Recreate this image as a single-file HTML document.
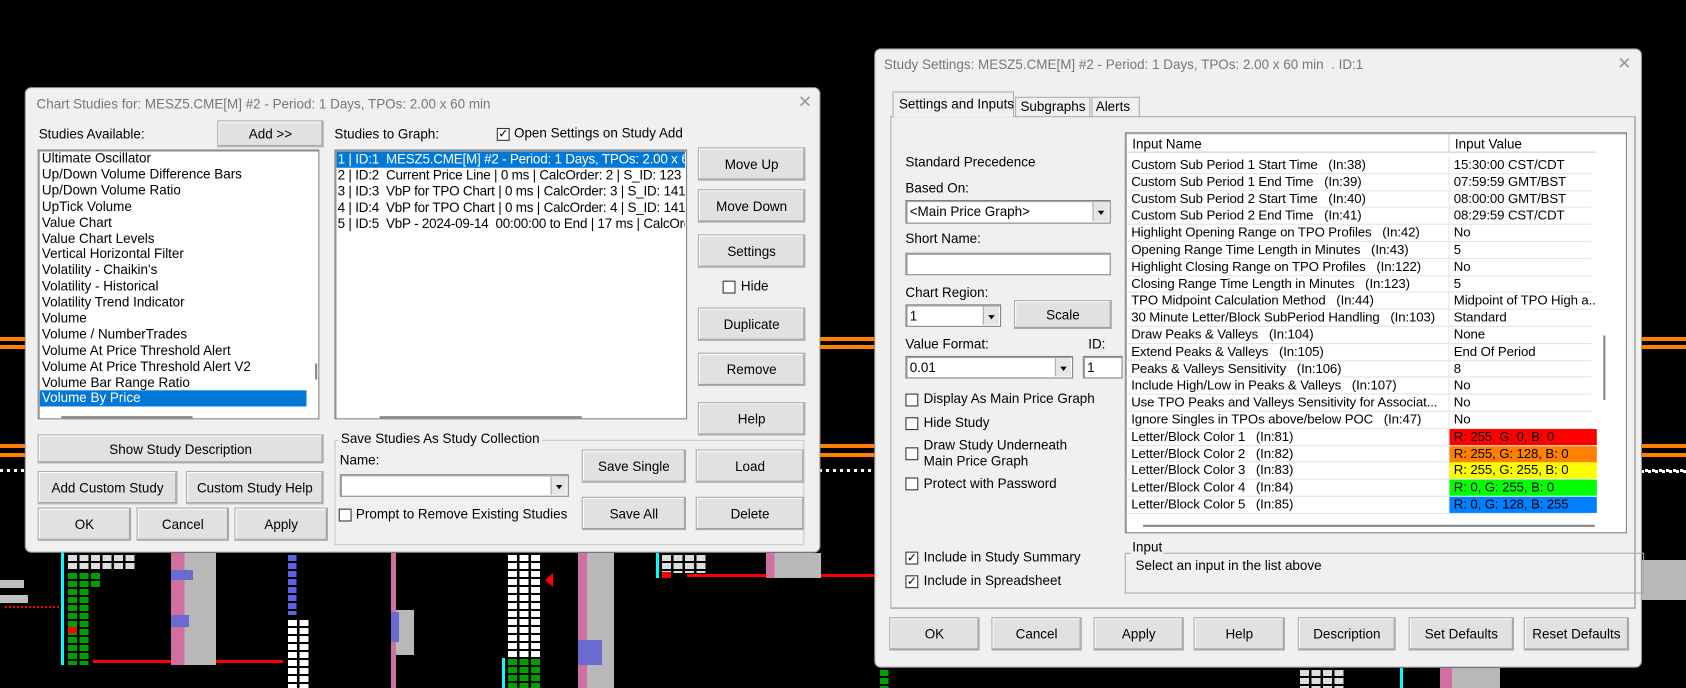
<!DOCTYPE html>
<html><head><meta charset="utf-8"><style>
*{box-sizing:border-box;margin:0;padding:0}
body{width:1686px;height:688px;background:#000;overflow:hidden;position:relative;font-family:"Liberation Sans",sans-serif}
.a{position:absolute}
#S{position:absolute;left:0;top:0;width:1568px;height:640px;transform:scale(1.0753);transform-origin:0 0}
.dlg{position:absolute;background:#f0f0f0;border:1px solid #9a9a9a;border-radius:6px;font-size:12.5px;color:#000}
.t{position:absolute;white-space:nowrap;font-size:12.5px;line-height:15px}
.btn{position:absolute;background:#e1e1e1;border:1px solid #adadad;box-shadow:inset -1px -1px 0 #a0a0a0,inset 1px 1px 0 #fff;text-align:center;font-size:12.5px;display:flex;align-items:center;justify-content:center;white-space:nowrap}
.box{position:absolute;background:#fff;border:1px solid #828282;box-shadow:inset 1px 1px 0 #a0a0a0}
.cb{position:absolute;width:12px;height:12px;border:1px solid #333;background:#fff;font-size:11px;line-height:10px;text-align:center}
.dd{position:absolute;right:1px;top:1px;bottom:1px;width:15px;background:#e6e6e6;border-left:1px solid #aaa}
.dd:after{content:"";position:absolute;left:4px;top:8px;border:3.5px solid transparent;border-top:4px solid #000}
.title{position:absolute;color:#777;font-size:12.5px;white-space:nowrap}
.x{position:absolute;color:#999;font-size:16px}
.row{position:absolute;left:0;height:15.8px;width:433px;border-bottom:1px solid #e4e4e4;font-size:12.3px;white-space:nowrap;line-height:15px;letter-spacing:-0.1px}
.row span{position:absolute}
.row .v{left:301px;width:137px;height:15px;padding-left:4px}
.row .n{left:5px}
.row:before{content:"";position:absolute;left:300px;top:0;bottom:0;border-left:1px solid #e4e4e4}
.wsq{position:absolute;background-image:linear-gradient(90deg,transparent 9px,#000 9px),linear-gradient(0deg,transparent 6px,#000 6px);background-size:11.5px 8px}
</style></head><body>
<!-- chart background -->
<div class="a" style="left:0;top:337px;width:1686px;height:4px;background:#ff7f00"></div>
<div class="a" style="left:0;top:345px;width:1686px;height:4px;background:#ff7f00"></div>
<div class="a" style="left:0;top:444px;width:1686px;height:4px;background:#ff7f00"></div>
<div class="a" style="left:0;top:453px;width:1686px;height:4px;background:#ff7f00"></div>
<div class="a" style="left:0;top:469px;width:1686px;height:3px;background:repeating-linear-gradient(90deg,#fff 0 3px,transparent 3px 7px)"></div>
<div class="a" style="left:0;top:580px;width:24px;height:8px;background:#c0c0c0"></div>
<div class="a" style="left:0;top:595px;width:28px;height:8px;background:#c0c0c0"></div>
<div class="a" style="left:5px;top:606px;width:55px;height:2px;background:repeating-linear-gradient(90deg,#f00 0 2px,transparent 2px 4px)"></div>
<div class="a" style="left:61px;top:540px;width:3px;height:125px;background:#0ff"></div>
<div class="a wsq" style="left:68px;top:553px;width:68px;height:18px;background-color:#ddd"></div>
<div class="a wsq" style="left:68px;top:571px;width:34px;height:16px;background-color:#00a000"></div>
<div class="a wsq" style="left:68px;top:587px;width:23px;height:78px;background-color:#00a000"></div>
<div class="a" style="left:68px;top:627px;width:9px;height:6px;background:#f00"></div>
<div class="a" style="left:93px;top:660px;width:190px;height:3px;background:#f00"></div>
<div class="a" style="left:171px;top:553px;width:45px;height:112px;background:linear-gradient(90deg,#d070a0 0 30%,#b8b8b8 30%)"></div>
<div class="a" style="left:171px;top:570px;width:22px;height:10px;background:#6a6ad0"></div>
<div class="a" style="left:171px;top:615px;width:18px;height:12px;background:#6a6ad0"></div>
<div class="a wsq" style="left:288px;top:553px;width:11px;height:62px;background-color:#6060e0"></div>
<div class="a wsq" style="left:288px;top:618px;width:23px;height:70px;background-color:#fff"></div>
<div class="a" style="left:391px;top:553px;width:5px;height:135px;background:#d070a0"></div>
<div class="a" style="left:396px;top:610px;width:18px;height:45px;background:#b8b8b8"></div>
<div class="a" style="left:391px;top:612px;width:8px;height:30px;background:#6a6ad0"></div>
<div class="a wsq" style="left:508px;top:553px;width:34px;height:104px;background-color:#fff"></div>
<div class="a wsq" style="left:508px;top:657px;width:34px;height:31px;background-color:#00a000"></div>
<div class="a" style="left:502px;top:658px;width:3px;height:30px;background:#0ff"></div>
<div class="a" style="left:545px;top:573px;width:0;height:0;border:7px solid transparent;border-right:8px solid #f00;border-left:0"></div>
<div class="a" style="left:578px;top:553px;width:36px;height:135px;background:linear-gradient(90deg,#d070a0 0 25%,#b8b8b8 25%)"></div>
<div class="a" style="left:578px;top:640px;width:24px;height:25px;background:#6a6ad0"></div>
<div class="a" style="left:656px;top:553px;width:3px;height:25px;background:#0ff"></div>
<div class="a wsq" style="left:662px;top:553px;width:46px;height:20px;background-color:#ddd"></div>
<div class="a" style="left:662px;top:572px;width:9px;height:6px;background:#f00"></div>
<div class="a" style="left:687px;top:574px;width:190px;height:3px;background:#f00"></div>
<div class="a" style="left:766px;top:553px;width:55px;height:25px;background:linear-gradient(90deg,#d070a0 0 15%,#b8b8b8 15%)"></div>
<div class="a wsq" style="left:880px;top:668px;width:11px;height:20px;background-color:#00a000"></div>
<div class="a wsq" style="left:1300px;top:668px;width:46px;height:20px;background-color:#ddd"></div>
<div class="a" style="left:1400px;top:668px;width:3px;height:20px;background:#0ff"></div>
<div class="a" style="left:1440px;top:668px;width:60px;height:20px;background:linear-gradient(90deg,#d070a0 0 20%,#b8b8b8 20%)"></div>
<div class="a" style="left:1641px;top:470px;width:45px;height:3px;background:repeating-linear-gradient(90deg,#fff 0 3px,transparent 3px 7px)"></div>
<div class="a" style="left:1641px;top:560px;width:45px;height:40px;background:#b8b8b8"></div>

<div id="S">
<!-- LEFT DIALOG -->
<div class="dlg" style="left:23px;top:81px;width:740px;height:433px">
 <div class="title" style="left:10px;top:8px">Chart Studies for: MESZ5.CME[M] #2 - Period: 1 Days, TPOs: 2.00 x 60 min</div>
 <div class="x" style="left:718px;top:3px">✕</div>
</div>
<div class="t" style="left:36px;top:118px">Studies Available:</div>
<div class="btn" style="left:202px;top:112px;width:99px;height:25px">Add &gt;&gt;</div>
<div class="box" style="left:35px;top:139px;width:262px;height:251px"></div>
<div class="t" style="left:39px;top:140px;line-height:14.9px">Ultimate Oscillator<br>Up/Down Volume Difference Bars<br>Up/Down Volume Ratio<br>UpTick Volume<br>Value Chart<br>Value Chart Levels<br>Vertical Horizontal Filter<br>Volatility - Chaikin's<br>Volatility - Historical<br>Volatility Trend Indicator<br>Volume<br>Volume / NumberTrades<br>Volume At Price Threshold Alert<br>Volume At Price Threshold Alert V2<br>Volume Bar Range Ratio</div>
<div class="a" style="left:37px;top:363px;width:248px;height:15px;background:#0078d7"></div>
<div class="t" style="left:39px;top:363px;color:#fff">Volume By Price</div>
<div class="a" style="left:293px;top:338px;width:2px;height:15px;background:#888"></div>
<div class="a" style="left:57px;top:387px;width:122px;height:2px;background:#888"></div>
<div class="t" style="left:311px;top:118px">Studies to Graph:</div>
<div class="cb" style="left:462px;top:119px">✓</div>
<div class="t" style="left:478px;top:117px">Open Settings on Study Add</div>
<div class="box" style="left:311px;top:139px;width:328px;height:251px;overflow:hidden"></div>
<div class="a" style="left:313px;top:141px;width:324px;height:15px;background:#0078d7"></div>
<div class="t" style="left:314px;top:141px;line-height:15px;width:323px;overflow:hidden;letter-spacing:-0.2px"><span style="color:#fff">1 | ID:1&nbsp; MESZ5.CME[M] #2 - Period: 1 Days, TPOs: 2.00 x 60</span><br>2 | ID:2&nbsp; Current Price Line | 0 ms | CalcOrder: 2 | S_ID: 123<br>3 | ID:3&nbsp; VbP for TPO Chart | 0 ms | CalcOrder: 3 | S_ID: 141<br>4 | ID:4&nbsp; VbP for TPO Chart | 0 ms | CalcOrder: 4 | S_ID: 141<br>5 | ID:5&nbsp; VbP - 2024-09-14&nbsp; 00:00:00 to End | 17 ms | CalcOrder</div>
<div class="a" style="left:353px;top:387px;width:188px;height:2px;background:#888"></div>
<div class="btn" style="left:649px;top:137px;width:100px;height:31px">Move Up</div>
<div class="btn" style="left:649px;top:176px;width:100px;height:31px">Move Down</div>
<div class="btn" style="left:649px;top:218px;width:100px;height:31px">Settings</div>
<div class="cb" style="left:672px;top:261px"></div>
<div class="t" style="left:689px;top:259px">Hide</div>
<div class="btn" style="left:649px;top:286px;width:100px;height:31px">Duplicate</div>
<div class="btn" style="left:649px;top:328px;width:100px;height:31px">Remove</div>
<div class="btn" style="left:649px;top:374px;width:100px;height:31px">Help</div>
<div class="btn" style="left:35px;top:404px;width:266px;height:27px">Show Study Description</div>
<div class="btn" style="left:35px;top:438px;width:130px;height:31px">Add Custom Study</div>
<div class="btn" style="left:173px;top:438px;width:128px;height:31px">Custom Study Help</div>
<div class="btn" style="left:35px;top:472px;width:87px;height:31px">OK</div>
<div class="btn" style="left:127px;top:472px;width:86px;height:31px">Cancel</div>
<div class="btn" style="left:218px;top:472px;width:87px;height:31px">Apply</div>
<div class="a" style="left:311px;top:409px;width:437px;height:98px;border:1px solid #c8c8c8"></div>
<div class="t" style="left:315px;top:401px;background:#f0f0f0;padding:0 2px">Save Studies As Study Collection</div>
<div class="t" style="left:316px;top:421px">Name:</div>
<div class="box" style="left:316px;top:441px;width:213px;height:21px"><div class="dd"></div></div>
<div class="cb" style="left:315px;top:473px"></div>
<div class="t" style="left:331px;top:471px">Prompt to Remove Existing Studies</div>
<div class="btn" style="left:541px;top:418px;width:97px;height:31px">Save Single</div>
<div class="btn" style="left:647px;top:418px;width:101px;height:31px">Load</div>
<div class="btn" style="left:541px;top:462px;width:97px;height:31px">Save All</div>
<div class="btn" style="left:647px;top:462px;width:101px;height:31px">Delete</div>

<!-- RIGHT DIALOG -->
<div class="dlg" style="left:813px;top:45px;width:714px;height:576px">
 <div class="title" style="left:8px;top:7px">Study Settings: MESZ5.CME[M] #2 - Period: 1 Days, TPOs: 2.00 x 60 min&nbsp; . ID:1</div>
 <div class="x" style="left:690px;top:3px">✕</div>
</div>
<div class="a" style="left:828px;top:108px;width:693px;height:458px;border:1px solid #adadad;border-right-color:#888;border-bottom-color:#888"></div>
<div class="a" style="left:830px;top:85px;width:113px;height:24px;border:1px solid #adadad;border-bottom:none;background:#f0f0f0"></div>
<div class="t" style="left:836px;top:90px">Settings and Inputs</div>
<div class="a" style="left:944px;top:90px;width:70px;height:19px;border:1px solid #adadad;border-bottom:none"></div>
<div class="t" style="left:949px;top:92px">Subgraphs</div>
<div class="a" style="left:1015px;top:90px;width:45px;height:19px;border:1px solid #adadad;border-bottom:none"></div>
<div class="t" style="left:1019px;top:92px">Alerts</div>

<div class="t" style="left:842px;top:144px">Standard Precedence</div>
<div class="t" style="left:842px;top:168px">Based On:</div>
<div class="box" style="left:842px;top:186px;width:191px;height:22px"><div class="dd"></div><span class="t" style="left:3px;top:3px">&lt;Main Price Graph&gt;</span></div>
<div class="t" style="left:842px;top:215px">Short Name:</div>
<div class="box" style="left:842px;top:235px;width:191px;height:21px"></div>
<div class="t" style="left:842px;top:265px">Chart Region:</div>
<div class="box" style="left:842px;top:283px;width:89px;height:21px"><div class="dd"></div><span class="t" style="left:3px;top:3px">1</span></div>
<div class="btn" style="left:943px;top:279px;width:91px;height:27px">Scale</div>
<div class="t" style="left:842px;top:313px">Value Format:</div>
<div class="t" style="left:1012px;top:313px">ID:</div>
<div class="box" style="left:842px;top:331px;width:156px;height:21px"><div class="dd"></div><span class="t" style="left:3px;top:3px">0.01</span></div>
<div class="box" style="left:1007px;top:331px;width:37px;height:21px"><span class="t" style="left:3px;top:3px">1</span></div>
<div class="cb" style="left:842px;top:366px"></div><div class="t" style="left:859px;top:364px">Display As Main Price Graph</div>
<div class="cb" style="left:842px;top:388px"></div><div class="t" style="left:859px;top:386px">Hide Study</div>
<div class="cb" style="left:842px;top:416px"></div><div class="t" style="left:859px;top:407px">Draw Study Underneath<br>Main Price Graph</div>
<div class="cb" style="left:842px;top:444px"></div><div class="t" style="left:859px;top:443px">Protect with Password</div>
<div class="cb" style="left:842px;top:513px">✓</div><div class="t" style="left:859px;top:511px">Include in Study Summary</div>
<div class="cb" style="left:842px;top:535px">✓</div><div class="t" style="left:859px;top:533px">Include in Spreadsheet</div>

<div class="box" style="left:1046px;top:123px;width:467px;height:373px;overflow:hidden">
 <div class="a" style="left:1px;top:1px;width:436px;height:17px;border-bottom:1px solid #ccc;background:#fff"></div>
 <div class="a" style="left:300px;top:1px;height:17px;border-left:1px solid #ccc"></div>
 <div class="t" style="left:6px;top:3px">Input Name</div>
 <div class="t" style="left:306px;top:3px">Input Value</div>
 <div class="a" style="left:0;top:22px">
  <div class="row" style="top:0"><span class="n">Custom Sub Period 1 Start Time&nbsp;&nbsp; (In:38)</span><span class="v">15:30:00 CST/CDT</span></div>
  <div class="row" style="top:15.8px"><span class="n">Custom Sub Period 1 End Time&nbsp;&nbsp; (In:39)</span><span class="v">07:59:59 GMT/BST</span></div>
  <div class="row" style="top:31.6px"><span class="n">Custom Sub Period 2 Start Time&nbsp;&nbsp; (In:40)</span><span class="v">08:00:00 GMT/BST</span></div>
  <div class="row" style="top:47.4px"><span class="n">Custom Sub Period 2 End Time&nbsp;&nbsp; (In:41)</span><span class="v">08:29:59 CST/CDT</span></div>
  <div class="row" style="top:63.2px"><span class="n">Highlight Opening Range on TPO Profiles&nbsp;&nbsp; (In:42)</span><span class="v">No</span></div>
  <div class="row" style="top:79px"><span class="n">Opening Range Time Length in Minutes&nbsp;&nbsp; (In:43)</span><span class="v">5</span></div>
  <div class="row" style="top:94.8px"><span class="n">Highlight Closing Range on TPO Profiles&nbsp;&nbsp; (In:122)</span><span class="v">No</span></div>
  <div class="row" style="top:110.6px"><span class="n">Closing Range Time Length in Minutes&nbsp;&nbsp; (In:123)</span><span class="v">5</span></div>
  <div class="row" style="top:126.4px"><span class="n">TPO Midpoint Calculation Method&nbsp;&nbsp; (In:44)</span><span class="v">Midpoint of TPO High a..</span></div>
  <div class="row" style="top:142.2px"><span class="n">30 Minute Letter/Block SubPeriod Handling&nbsp;&nbsp; (In:103)</span><span class="v">Standard</span></div>
  <div class="row" style="top:158px"><span class="n">Draw Peaks &amp; Valleys&nbsp;&nbsp; (In:104)</span><span class="v">None</span></div>
  <div class="row" style="top:173.8px"><span class="n">Extend Peaks &amp; Valleys&nbsp;&nbsp; (In:105)</span><span class="v">End Of Period</span></div>
  <div class="row" style="top:189.6px"><span class="n">Peaks &amp; Valleys Sensitivity&nbsp;&nbsp; (In:106)</span><span class="v">8</span></div>
  <div class="row" style="top:205.4px"><span class="n">Include High/Low in Peaks &amp; Valleys&nbsp;&nbsp; (In:107)</span><span class="v">No</span></div>
  <div class="row" style="top:221.2px"><span class="n">Use TPO Peaks and Valleys Sensitivity for Associat...</span><span class="v">No</span></div>
  <div class="row" style="top:237px"><span class="n">Ignore Singles in TPOs above/below POC&nbsp;&nbsp; (In:47)</span><span class="v">No</span></div>
  <div class="row" style="top:252.8px"><span class="n">Letter/Block Color 1&nbsp;&nbsp; (In:81)</span><span class="v" style="background:#ff0000">R: 255, G: 0, B: 0</span></div>
  <div class="row" style="top:268.6px"><span class="n">Letter/Block Color 2&nbsp;&nbsp; (In:82)</span><span class="v" style="background:#ff8000">R: 255, G: 128, B: 0</span></div>
  <div class="row" style="top:284.4px"><span class="n">Letter/Block Color 3&nbsp;&nbsp; (In:83)</span><span class="v" style="background:#ffff00">R: 255, G: 255, B: 0</span></div>
  <div class="row" style="top:300.2px"><span class="n">Letter/Block Color 4&nbsp;&nbsp; (In:84)</span><span class="v" style="background:#00ff00">R: 0, G: 255, B: 0</span></div>
  <div class="row" style="top:316px"><span class="n">Letter/Block Color 5&nbsp;&nbsp; (In:85)</span><span class="v" style="background:#0080ff">R: 0, G: 128, B: 255</span></div>
 </div>
 <div class="a" style="left:444px;top:188px;width:2px;height:60px;background:#888"></div>
 <div class="a" style="left:16px;top:364px;width:420px;height:2px;background:#888"></div>
</div>
<div class="a" style="left:1046px;top:514px;width:483px;height:38px;border:1px solid #adadad"></div>
<div class="t" style="left:1052px;top:502px;background:#f0f0f0;padding:0 1px">Input</div>
<div class="t" style="left:1056px;top:519px">Select an input in the list above</div>

<div class="btn" style="left:827px;top:574px;width:84px;height:31px">OK</div>
<div class="btn" style="left:922px;top:574px;width:84px;height:31px">Cancel</div>
<div class="btn" style="left:1017px;top:574px;width:84px;height:31px">Apply</div>
<div class="btn" style="left:1110px;top:574px;width:85px;height:31px">Help</div>
<div class="btn" style="left:1207px;top:574px;width:91px;height:31px">Description</div>
<div class="btn" style="left:1310px;top:574px;width:98px;height:31px">Set Defaults</div>
<div class="btn" style="left:1417px;top:574px;width:98px;height:31px">Reset Defaults</div>
</div>
</body></html>
